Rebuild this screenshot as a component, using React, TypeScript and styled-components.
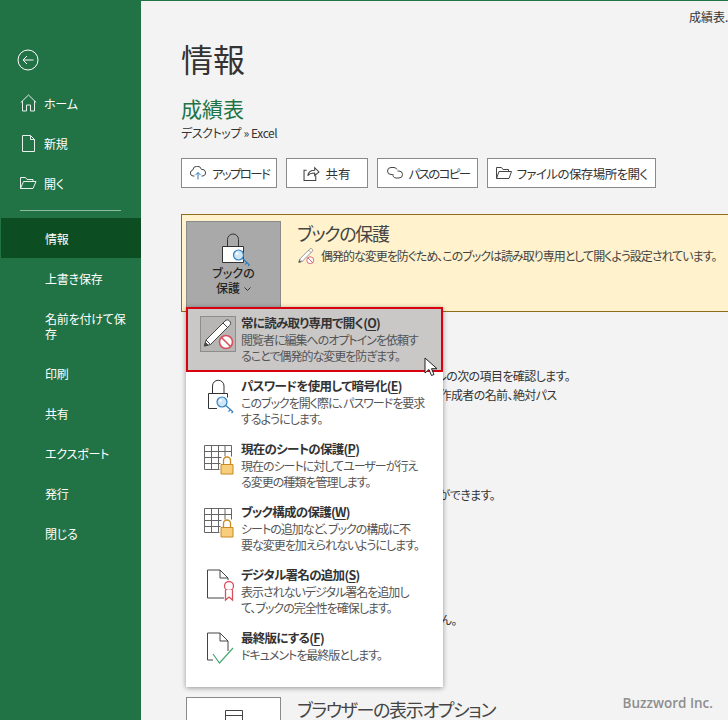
import styled, { createGlobalStyle } from "styled-components";

const GlobalStyle = createGlobalStyle`
    html, body {
        margin: 0;
        padding: 0;
        background: #f3f3f3;
    }
    * {
        box-sizing: border-box;
    }
`;

const Page = styled.div`
    position: relative;
    display: flex;
    width: 728px;
    height: 720px;
    overflow: hidden;
    font-family: "Noto Sans CJK JP", "Noto Sans", sans-serif;
    font-feature-settings: "palt";
    color: #333;
`;

const Sidebar = styled.nav`
    flex: 0 0 141px;
    display: flex;
    flex-direction: column;
    padding-top: 48px;
    background: #217346;
    color: #fff;
`;

const BackButton = styled.div`
    height: 22px;
    margin: 1px 0 12px 17px;
`;

const NavItem = styled.div<{ $active?: boolean; $tall?: boolean }>`
    display: flex;
    align-items: center;
    gap: 7px;
    height: ${(p) => (p.$tall ? "55px" : "40px")};
    padding-left: 20px;
    margin-left: ${(p) => (p.$active ? "1px" : "0")};
    font-size: 12px;
    line-height: 15px;
    letter-spacing: -0.2px;
    background: ${(p) => (p.$active ? "#0c4e22" : "transparent")};
`;

const NavTextItem = styled(NavItem)<{ $active?: boolean; $tall?: boolean }>`
    padding-left: ${(p) => (p.$active ? "44px" : "45px")};
    padding-right: 14px;
`;

const NavIcon = styled.span`
    display: flex;
    width: 17px;
    justify-content: center;
`;

const Divider = styled.div`
    height: 1px;
    margin: 7px 20px;
    background: #8fbaa2;
`;

const Main = styled.main`
    flex: 1;
    min-width: 0;
    border-top: 1px solid #217346;
    padding-left: 40px;
    overflow: hidden;
`;

const TitleBar = styled.div`
    height: 35px;
    padding: 8px 0 0 508px;
    font-size: 12px;
    line-height: 16px;
    white-space: nowrap;
`;

const Heading = styled.h1`
    margin: 0;
    font-size: 32px;
    line-height: 44px;
    font-weight: 400;
    color: #333;
`;

const BookName = styled.h2`
    margin: 13px 0 0;
    font-size: 21px;
    line-height: 30px;
    font-weight: 400;
    color: #217346;
`;

const PathText = styled.div`
    margin-top: 2px;
    font-size: 12px;
    line-height: 16px;
    letter-spacing: -0.4px;
`;

const Toolbar = styled.div`
    display: flex;
    gap: 9px;
    margin-top: 17px;
`;

const ToolButton = styled.div<{ $width: number; $spacing: number }>`
    display: flex;
    align-items: center;
    justify-content: center;
    gap: 5px;
    width: ${(p) => p.$width}px;
    height: 30px;
    font-size: 12.5px;
    letter-spacing: ${(p) => p.$spacing}px;
    background: #fff;
    border: 1px solid #8a8a8a;
    white-space: nowrap;
`;

const Banner = styled.section`
    display: flex;
    gap: 16px;
    width: 620px;
    height: 98px;
    margin-top: 26px;
    padding: 6px 4px;
    background: #fff2cc;
    border: 1px solid #8f6c1e;
`;

const ProtectButton = styled.div`
    flex: 0 0 95px;
    display: flex;
    flex-direction: column;
    align-items: center;
    height: 89px;
    padding-top: 11px;
    background: #a9a9a9;
    border: 1px solid #8a8a8a;
    font-size: 12px;
    line-height: 15px;
    font-weight: 500;
    color: #262626;
    text-align: center;
`;

const ProtectLabel = styled.div`
    margin-top: -2px;
`;

const Chevron = styled.svg`
    margin-left: 4px;
    vertical-align: 2px;
`;

const BannerBody = styled.div`
    margin-top: -1px;
`;

const SectionTitle = styled.h3`
    margin: 0;
    font-size: 18px;
    line-height: 26px;
    font-weight: 400;
    letter-spacing: -1.3px;
    color: #444;
    white-space: nowrap;
`;

const BannerLine = styled.div`
    display: flex;
    align-items: center;
    gap: 6px;
    font-size: 12px;
    line-height: 19px;
    letter-spacing: -1px;
    color: #444;
    white-space: nowrap;
`;

const Section = styled.section<{ $gap: number }>`
    display: flex;
    gap: 16px;
    margin-top: ${(p) => p.$gap}px;
    padding-left: 5px;
`;

const SectionButton = styled.div<{ $height?: number }>`
    flex: 0 0 95px;
    display: flex;
    justify-content: center;
    min-height: ${(p) => p.$height ?? 0}px;
    margin-top: 1px;
    padding-top: 12px;
    background: #fff;
    border: 1px solid #8a8a8a;
`;

const SectionLine = styled.div<{ $indent?: boolean }>`
    font-size: 12px;
    line-height: 19px;
    letter-spacing: -0.6px;
    padding-left: ${(p) => (p.$indent ? "18px" : "0")};
    white-space: nowrap;
`;

const Menu = styled.div`
    position: absolute;
    left: 186px;
    top: 307px;
    width: 257px;
    height: 380px;
    background: #fff;
    box-shadow: 0 1px 5px rgba(0, 0, 0, 0.4);
`;

const MenuItem = styled.div<{ $selected?: boolean }>`
    display: flex;
    height: ${(p) => (p.$selected ? "65px" : "63px")};
    padding: ${(p) => (p.$selected ? "5px 0 0 12px" : "6px 0 0 14px")};
    background: ${(p) => (p.$selected ? "#cac8c7" : "#fff")};
    border: ${(p) => (p.$selected ? "2px solid #d9000f" : "none")};
`;

const MenuIcon = styled.div<{ $selected?: boolean }>`
    flex: 0 0 36px;
    height: 36px;
    margin-top: ${(p) => (p.$selected ? "2px" : "0")};
    background: ${(p) => (p.$selected ? "#b8b6b5" : "transparent")};
    border: ${(p) => (p.$selected ? "1px solid #8d8d8d" : "none")};
`;

const MenuText = styled.div<{ $selected?: boolean }>`
    margin: ${(p) => (p.$selected ? "0" : "-1px")} 0 0 5px;
    white-space: nowrap;
`;

const MenuTitle = styled.div`
    font-size: 12.5px;
    line-height: 18px;
    font-weight: 700;
    letter-spacing: -0.7px;
    color: #333;

    u {
        text-underline-offset: 2px;
    }
`;

const MenuDesc = styled.div`
    font-size: 12px;
    line-height: 16px;
    letter-spacing: -1px;
    color: #555;
`;

const Cursor = styled.svg`
    position: absolute;
    left: 424px;
    top: 357px;
`;

const Watermark = styled.div`
    position: absolute;
    right: 15px;
    top: 693px;
    font-family: "Open Sans", sans-serif;
    font-size: 13.5px;
    line-height: 20px;
    font-weight: 600;
    color: #8e8e8e;
`;

const BackIcon = () => (
    <svg width="22" height="22" viewBox="0 0 22 22" fill="none" stroke="#fff" strokeWidth="1">
        <circle cx="11" cy="11" r="10" />
        <path d="M16.5 11H6M10 7l-4 4 4 4" />
    </svg>
);

const HomeIcon = () => (
    <svg width="17" height="18" viewBox="0 0 17 18" fill="none" stroke="#e8f1ec" strokeWidth="1">
        <path d="M.8 8.5 8.5 1l7.7 7.5M2.5 7v10h4v-6h4v6h4V7" />
    </svg>
);

const NewIcon = () => (
    <svg width="13" height="17" viewBox="0 0 13 17" fill="none" stroke="#e8f1ec" strokeWidth="1">
        <path d="M.5.5h8l4 4v12H.5zM8.5.5v4h4" />
    </svg>
);

const OpenIcon = () => (
    <svg width="17" height="12" viewBox="0 0 17 12" fill="none" stroke="#e8f1ec" strokeWidth="1">
        <path d="M.5 11.5V.5h5l1.500 2h6v2M.5 11.500h12.500l3-7H3.500l-3 7z" />
    </svg>
);

const UploadIcon = () => (
    <svg width="18" height="14" viewBox="0 0 17 14" fill="none" stroke="#444" strokeWidth="1">
        <path d="M5 10H3.500a3 3 0 0 1-.3-5.900A4.500 4.500 0 0 1 12 3.500 3.200 3.200 0 0 1 13.500 10H12" />
        <path d="M8.500 13.500V6.500M6 9l2.500-2.500L11 9" stroke="#2b7cc0" />
    </svg>
);

const ShareIcon = () => (
    <svg width="17" height="16" viewBox="0 0 15 15" fill="none" stroke="#444" strokeWidth="1">
        <path d="M3 5H.5v9.500h11V10M4 10c.5-3.500 3-5 6.500-5V2.500l4 4-4 3.500V7.500C8 7.500 5.500 8 4 10z" />
    </svg>
);

const LinkIcon = () => (
    <svg width="18" height="12" viewBox="0 0 17 12" fill="none" stroke="#444" strokeWidth="1">
        <path d="M6 7.500H4.500a3.500 3.500 0 0 1 0-7h3a3.500 3.500 0 0 1 3 2" />
        <path d="M11 4h1.500a3.500 3.500 0 0 1 0 7h-3a3.500 3.500 0 0 1-3-4" />
    </svg>
);

const FolderIcon = () => (
    <svg width="16" height="12" viewBox="0 0 16 12" fill="none" stroke="#444" strokeWidth="1">
        <path d="M.5 11.500V.5h5l1.500 2h5.500v2M.5 11.500H13l2.500-7H3l-2.500 7z" />
    </svg>
);

const KeyShape = ({ x, y }: { x: number; y: number }) => (
    <g transform={`translate(${x} ${y})`} fill="none" stroke="#2f7fc1" strokeWidth="1.200">
        <circle cx="6" cy="6" r="5" fill="#cfe6f7" />
        <circle cx="4.500" cy="4.500" r="1.200" fill="#fff" stroke="none" />
        <path d="m10 9.500 7 6.500m-2.500-2.300-2 2m4.500 0-1.500 1.500" />
    </g>
);

const LockKeyIcon = () => (
    <svg width="34" height="34" viewBox="0 0 34 34" fill="none">
        <path d="M10.500 13V6.500a5.500 5.500 0 0 1 11 0V13" stroke="#333" />
        <path d="M5.500 13.500h21v16h-21z" fill="#fff" stroke="#333" />
        <KeyShape x={15.500} y={16} />
    </svg>
);

const NoSign = ({ cx, cy, r }: { cx: number; cy: number; r: number }) => (
    <g fill="#fff" stroke="#d8505c" strokeWidth={r / 4}>
        <circle cx={cx} cy={cy} r={r} />
        <path d={`M${cx - r * 0.7} ${cy - r * 0.7}L${cx + r * 0.7} ${cy + r * 0.7}`} />
    </g>
);

const PencilIcon = ({ size }: { size: number }) => (
    <svg width={size} height={size} viewBox="0 0 34 32" fill="none" stroke="#444" strokeWidth="1">
        <path d="M5 22 24 3c1.500-1.500 3-1.500 4.500 0s1.500 3 0 4.500L9.500 26.500 3.500 28z" fill="#fff" />
        <path d="m5 22 4.500 4.500M22 5l4.500 4.500" />
        <path d="m3.500 28 1-3.500 2.500 2.500z" fill="#555" />
        <NoSign cx={25} cy={24} r={6.500} />
    </svg>
);

const PasswordIcon = () => (
    <svg width="36" height="36" viewBox="0 0 36 36" fill="none">
        <path d="M12.500 15V8a5.750 5.750 0 0 1 11.500 0v7" stroke="#333" />
        <path d="M17 30.500H8.500v-15h19v4" stroke="#333" />
        <KeyShape x={16} y={18} />
    </svg>
);

const SheetLockIcon = () => (
    <svg width="36" height="36" viewBox="0 0 36 36" fill="none">
        <path
            d="M4.500 4.500h27v11M4.500 4.500v24h15M4.500 10.500h27M4.500 16.500h17M4.500 22.500h16M11.500 4.500v24M18.500 4.500v24M25 4.500v11"
            stroke="#666"
        />
        <path d="M23.500 23v-3.500a3.500 3.500 0 0 1 7 0V23" stroke="#c98a1f" strokeWidth="1.300" />
        <path d="M21 23.500h12v9.500H21z" fill="#f7cf7c" stroke="#c98a1f" />
    </svg>
);

const SignIcon = () => (
    <svg width="36" height="36" viewBox="0 0 36 36" fill="none">
        <path d="M28 13v-2l-8-8H7.500v28H24M20 3v8h8" stroke="#444" />
        <circle cx="29" cy="19" r="4.500" fill="#fff" stroke="#d8505c" strokeWidth="1.300" />
        <path d="M25.500 23v10l3.500-3 3.500 3V23" fill="#fff" stroke="#d8505c" strokeWidth="1.300" />
    </svg>
);

const FinalIcon = () => (
    <svg width="36" height="36" viewBox="0 0 36 36" fill="none">
        <path d="M20 3H7.500v27H13M20 3l8 8v10M20 3v8h8" stroke="#444" />
        <path d="m13 24 6.500 9L33 18" stroke="#45a872" strokeWidth="1.200" />
    </svg>
);

const items = [
    {
        title: "パスワードを使用して暗号化",
        key: "E",
        lines: ["このブックを開く際に、パスワードを要求", "するようにします。"],
        icon: <PasswordIcon />,
    },
    {
        title: "現在のシートの保護",
        key: "P",
        lines: ["現在のシートに対してユーザーが行え", "る変更の種類を管理します。"],
        icon: <SheetLockIcon />,
    },
    {
        title: "ブック構成の保護",
        key: "W",
        lines: ["シートの追加など、ブックの構成に不", "要な変更を加えられないようにします。"],
        icon: <SheetLockIcon />,
    },
    {
        title: "デジタル署名の追加",
        key: "S",
        lines: ["表示されないデジタル署名を追加し", "て、ブックの完全性を確保します。"],
        icon: <SignIcon />,
    },
    {
        title: "最終版にする",
        key: "F",
        lines: ["ドキュメントを最終版とします。"],
        icon: <FinalIcon />,
    },
];

const App = () => {
    return (
        <Page>
            <GlobalStyle />
            <Sidebar>
                <BackButton>
                    <BackIcon />
                </BackButton>
                <NavItem>
                    <NavIcon>
                        <HomeIcon />
                    </NavIcon>
                    ホーム
                </NavItem>
                <NavItem>
                    <NavIcon>
                        <NewIcon />
                    </NavIcon>
                    新規
                </NavItem>
                <NavItem>
                    <NavIcon>
                        <OpenIcon />
                    </NavIcon>
                    開く
                </NavItem>
                <Divider />
                <NavTextItem $active>情報</NavTextItem>
                <NavTextItem>上書き保存</NavTextItem>
                <NavTextItem $tall>名前を付けて保存</NavTextItem>
                <NavTextItem>印刷</NavTextItem>
                <NavTextItem>共有</NavTextItem>
                <NavTextItem>エクスポート</NavTextItem>
                <NavTextItem>発行</NavTextItem>
                <NavTextItem>閉じる</NavTextItem>
            </Sidebar>
            <Main>
                <TitleBar>成績表.xlsx</TitleBar>
                <Heading>情報</Heading>
                <BookName>成績表</BookName>
                <PathText>デスクトップ » Excel</PathText>
                <Toolbar>
                    <ToolButton $width={96} $spacing={-1.7}>
                        <UploadIcon />
                        アップロード
                    </ToolButton>
                    <ToolButton $width={82} $spacing={0}>
                        <ShareIcon />
                        共有
                    </ToolButton>
                    <ToolButton $width={101} $spacing={-1.7}>
                        <LinkIcon />
                        パスのコピー
                    </ToolButton>
                    <ToolButton $width={169} $spacing={-0.6}>
                        <FolderIcon />
                        ファイルの保存場所を開く
                    </ToolButton>
                </Toolbar>
                <Banner>
                    <ProtectButton>
                        <LockKeyIcon />
                        <ProtectLabel>
                            ブックの
                            <br />
                            保護
                            <Chevron width="7" height="4" viewBox="0 0 7 4" fill="none" stroke="#333">
                                <path d="m.5.5 3 3 3-3" />
                            </Chevron>
                        </ProtectLabel>
                    </ProtectButton>
                    <BannerBody>
                        <SectionTitle>ブックの保護</SectionTitle>
                        <BannerLine>
                            <PencilIcon size={18} />
                            偶発的な変更を防ぐため、このブックは読み取り専用として開くよう設定されています。
                        </BannerLine>
                    </BannerBody>
                </Banner>
                <Section $gap={28}>
                    <SectionButton />
                    <div>
                        <SectionTitle>ブックの検査</SectionTitle>
                        <SectionLine>ブックを公開する前に、ファイルの次の項目を確認します。</SectionLine>
                        <SectionLine $indent>ドキュメントのプロパティ、作成者の名前、絶対パス</SectionLine>
                    </div>
                </Section>
                <Section $gap={55}>
                    <SectionButton />
                    <div>
                        <SectionTitle>ブックの管理</SectionTitle>
                        <SectionLine>以前のバージョン履歴の確認ができます。</SectionLine>
                    </div>
                </Section>
                <Section $gap={80}>
                    <SectionButton />
                    <div>
                        <SectionTitle>変更内容</SectionTitle>
                        <SectionLine>保存前の変更内容はありません。</SectionLine>
                    </div>
                </Section>
                <Section $gap={67}>
                    <SectionButton $height={86}>
                        <svg width="24" height="24" viewBox="0 0 24 24" fill="none" stroke="#444">
                            <path d="M3.500.5h17v23h-17zM3.500 5.500h17" />
                        </svg>
                    </SectionButton>
                    <div>
                        <SectionTitle>ブラウザーの表示オプション</SectionTitle>
                    </div>
                </Section>
            </Main>
            <Menu>
                <MenuItem $selected>
                    <MenuIcon $selected>
                        <PencilIcon size={34} />
                    </MenuIcon>
                    <MenuText $selected>
                        <MenuTitle>
                            常に読み取り専用で開く(<u>O</u>)
                        </MenuTitle>
                        <MenuDesc>閲覧者に編集へのオプトインを依頼す</MenuDesc>
                        <MenuDesc>ることで偶発的な変更を防ぎます。</MenuDesc>
                    </MenuText>
                </MenuItem>
                {items.map((item) => (
                    <MenuItem key={item.key}>
                        <MenuIcon>{item.icon}</MenuIcon>
                        <MenuText>
                            <MenuTitle>
                                {item.title}(<u>{item.key}</u>)
                            </MenuTitle>
                            {item.lines.map((line) => (
                                <MenuDesc key={line}>{line}</MenuDesc>
                            ))}
                        </MenuText>
                    </MenuItem>
                ))}
            </Menu>
            <Cursor width="14" height="20" viewBox="0 0 14 20">
                <path d="M1 1v15l4-3.500 2.500 6 2.500-1-2.500-5.800H13z" fill="#fff" stroke="#222" strokeWidth="1" />
            </Cursor>
            <Watermark>Buzzword Inc.</Watermark>
        </Page>
    );
};

export default App;
